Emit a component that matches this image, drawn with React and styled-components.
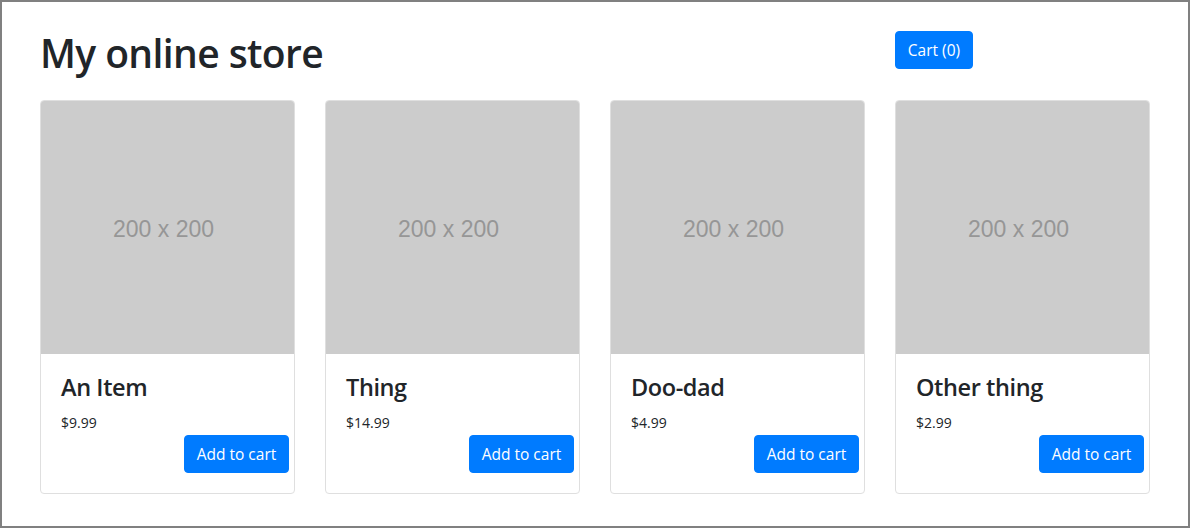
import React from "react";
import styled, { createGlobalStyle } from "styled-components";

const Global = createGlobalStyle`
  html, body { margin: 0; padding: 0; background: #fff; }
  body { font-family: "Open Sans", "Noto Sans", sans-serif; color: #212529; }
  * { box-sizing: border-box; }
`;

const Frame = styled.div`
  width: 1190px;
  height: 528px;
  border: 2px solid #808080;
  padding: 27px 0 0 38px;
`;

const Header = styled.div`
  display: flex;
  align-items: flex-start;
  height: 71px;
`;

const Title = styled.h1`
  margin: 0;
  width: 855px;
  font-size: 39px;
  font-weight: 600;
  letter-spacing: -0.6px;
  line-height: 48px;
`;

const BlueButton = styled.button`
  background: #007bff;
  color: #fff;
  border: 1px solid #007bff;
  border-radius: 4px;
  font-family: inherit;
  font-size: 15.5px;
  line-height: 22px;
  height: 38px;
  padding: 0;
  cursor: pointer;
  white-space: nowrap;
`;

const CartButton = styled(BlueButton)`
  margin-top: 2px;
  width: 78px;
`;

const Grid = styled.div`
  display: grid;
  grid-template-columns: repeat(4, 255px);
  column-gap: 30px;
`;

const Card = styled.div`
  border: 1px solid #dfdfdf;
  border-radius: 4px;
  overflow: hidden;
  display: flex;
  flex-direction: column;
`;

const Placeholder = styled.div`
  height: 253px;
  background: #cccccc;
  display: flex;
  align-items: center;
  justify-content: center;
  padding: 3px 8px 0 0;
  font-family: "Liberation Sans", Arial, sans-serif;
  font-size: 23px;
  color: #969696;
`;

const Body = styled.div`
  padding: 19px 20px 20px 20px;
  display: flex;
  flex-direction: column;
`;

const ItemName = styled.h4`
  margin: 0 0 9px 0;
  font-size: 23.5px;
  font-weight: 600;
  letter-spacing: -0.4px;
  line-height: 29px;
`;

const Price = styled.p`
  margin: 0;
  font-size: 14px;
  line-height: 24px;
`;

const Actions = styled.div`
  display: flex;
  justify-content: flex-end;
  margin-right: -15px;
`;

const AddButton = styled(BlueButton)`
  width: 105px;
`;

const items = [
  { name: "An Item", price: "$9.99" },
  { name: "Thing", price: "$14.99" },
  { name: "Doo-dad", price: "$4.99" },
  { name: "Other thing", price: "$2.99" },
];

export default function App() {
  return (
    <>
      <Global />
      <Frame>
        <Header>
          <Title>My online store</Title>
          <CartButton>Cart (0)</CartButton>
        </Header>
        <Grid>
          {items.map((it) => (
            <Card key={it.name}>
              <Placeholder>200 x 200</Placeholder>
              <Body>
                <ItemName>{it.name}</ItemName>
                <Price>{it.price}</Price>
                <Actions>
                  <AddButton>Add to cart</AddButton>
                </Actions>
              </Body>
            </Card>
          ))}
        </Grid>
      </Frame>
    </>
  );
}
